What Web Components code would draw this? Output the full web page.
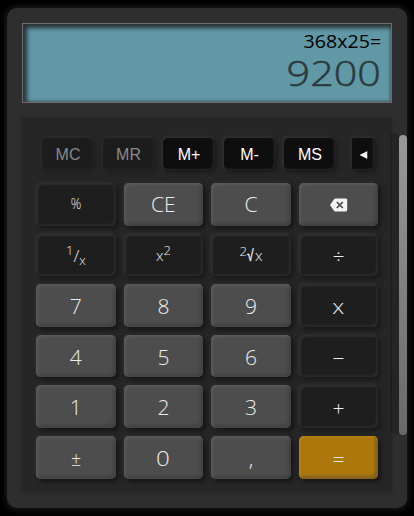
<!DOCTYPE html>
<html lang="en"><head><meta charset="utf-8"><title>Calculator</title>
<style>html,body{margin:0;background:#000;height:516px;overflow:hidden;font-family:"Open Sans","Noto Sans",sans-serif}</style></head>
<body><calc-app></calc-app>
<script>
class CalcKey extends HTMLElement{
 connectedCallback(){
  this.attachShadow({mode:'open'}).innerHTML=`<style>
  :host{box-sizing:border-box;display:flex;align-items:center;justify-content:center;border-radius:5px;color:#eee;font-size:21px;font-weight:300;line-height:1;background:#4d4d4d;box-shadow:3px 3px 4px #171717,-1px -1px 3px #303030,inset 2px 2px 3px #5a5a5a,inset -3px -3px 3px #434343}
  :host([tone=dark]){background:#1e1e1e;box-shadow:3px 3px 4px #1a1a1a,-1px -1px 3px #303030,inset 2px 2px 2px #303030,inset -2px -2px 2px #2a2a2a}
  :host([tone=gold]){background:#ad780b;box-shadow:3px 3px 4px #171717,inset 1px 1px 2px #b9841c,inset -3px -3px 3px #806020}
  :host([small]){font-size:15px}
  span{display:block;white-space:nowrap;transform:translateY(var(--dy,1px)) scaleX(var(--sx,1))}
  </style><span><slot></slot></span>`;
 }}
customElements.define('calc-key',CalcKey);
class MemKey extends HTMLElement{
 connectedCallback(){
  this.attachShadow({mode:'open'}).innerHTML=`<style>
  :host{box-sizing:border-box;display:flex;align-items:center;justify-content:center;width:51px;height:32px;border-radius:5px;background:#0e0e0e;color:#fff;font:16px/1 "Liberation Sans",Arial,sans-serif;box-shadow:2px 2px 4px #181818,-1px -1px 2px 1px #303030,inset -1px -1px 2px #292929}
  :host([off]){background:#1c1c1c;color:#888;box-shadow:2px 2px 4px #1e1e1e,-1px -1px 3px #303030,inset -1px -1px 3px #262626}
  :host([arrow]){width:22px;border-radius:2px;margin-left:7px;font-size:0}
  span{display:block;transform:translate(.5px,1px)}
  </style><span><slot></slot></span>`;
 }}
customElements.define('mem-key',MemKey);
class CalcScreen extends HTMLElement{
 connectedCallback(){
  this.attachShadow({mode:'open'}).innerHTML=`<style>
  :host{box-sizing:border-box;display:flex;flex-direction:column;align-items:flex-end;width:370px;height:80px;padding:7px 10px 0 0;border:1px solid #6c6c6c;background:#6098a5;box-shadow:inset 3px 3px 4px 1px #293234,inset -1px -1px 3px #4d626a;color:#000}
  .expression{font-size:18px;line-height:20px;height:20px;white-space:nowrap;transform-origin:right;transform:scaleX(1.09)}
  .result{font-size:35px;line-height:44px;font-weight:300;color:#2b393e;-webkit-text-stroke:.5px #2b393e;transform-origin:right;transform:scaleX(1.18)}
  </style><div class="expression"><slot name="expression"></slot></div><div class="result"><slot></slot></div>`;
 }}
customElements.define('calc-screen',CalcScreen);
class CalcApp extends HTMLElement{
 connectedCallback(){
  this.attachShadow({mode:'open'}).innerHTML=`<style>
  :host{box-sizing:border-box;display:block;width:400px;height:500px;margin:8px 7px;padding:15px 0 0 15px;border-radius:10px;background:#2e2e2e;box-shadow:0 0 7px 1px #202020}
  .body{display:flex;margin-top:15px}
  .pad{box-sizing:border-box;width:370px;height:374px;background:#262626;padding:20px 14px 0;box-shadow:0 0 3px #262626}
  .memory{display:flex;gap:9.5px;padding-left:6px}
  .keys{display:grid;grid-template-columns:repeat(4,79.6px);grid-auto-rows:42.6px;gap:8px;margin-top:13px}
  .rail{width:7px;height:299px;margin-top:17px;background:#252525;box-shadow:-1px -1px 2px #1b1b1b}
  .thumb{width:8px;height:300px;margin-top:17px;border-radius:4px;background:linear-gradient(#999,#696969)}
  .fraction{display:flex;font-size:17px;line-height:17px}
  .fraction i{font-style:normal;font-size:13px}.fraction i:first-child{transform:translateY(-5px)}.fraction i:last-child{transform:translateY(5px)}
  sup{font-size:13px;line-height:0;vertical-align:6px}
  .radical{display:flex;align-items:center}
  .radical sup{transform:translateY(-5px)}
  .root{font-family:"DejaVu Sans",sans-serif;font-size:16px;width:8px;transform-origin:left;transform:scaleX(.75);color:#fff;-webkit-text-stroke:.3px #fff}
  svg{display:block}
  </style>
  <calc-screen><span slot="expression">368x25=</span>9200</calc-screen>
  <div class="body"><div class="pad"><div class="memory">
  <mem-key off>MC</mem-key><mem-key off>MR</mem-key><mem-key>M+</mem-key><mem-key>M-</mem-key><mem-key>MS</mem-key><mem-key arrow><svg width="8" height="8"><path d="M0 4 8 0v8z" fill="#fff"/></svg></mem-key></div>
  <div class="keys">
  <calc-key tone="dark" small style="--sx:.87;--dy:-1px">%</calc-key><calc-key style="--dy:0px">CE</calc-key><calc-key style="--dy:0px">C</calc-key>
  <calc-key><svg width="18" height="14" viewBox="0 0 18 14"><path d="M5.4.5h10.4q1.4 0 1.4 1.4v10.2q0 1.4-1.4 1.4H5.4q-.7 0-1.2-.6L0 7l4.2-5.900Q4.700.5 5.400.5Z" fill="#f3f3f3"/><path d="m6.800 4 6 6m0-6-6 6" stroke="#484848" stroke-width="1.700"/></svg></calc-key>
  <calc-key tone="dark" small><div class="fraction"><i>1</i>/<i>x</i></div></calc-key><calc-key tone="dark" small>x<sup>2</sup></calc-key><calc-key tone="dark" small><div class="radical"><sup>2</sup><span class="root">√</span>x</div></calc-key><calc-key tone="dark" style="--dy:2px">÷</calc-key>
  <calc-key>7</calc-key><calc-key>8</calc-key><calc-key>9</calc-key><calc-key tone="dark" style="--sx:1.150">x</calc-key>
  <calc-key>4</calc-key><calc-key>5</calc-key><calc-key>6</calc-key><calc-key tone="dark" style="--dy:2px">−</calc-key>
  <calc-key>1</calc-key><calc-key>2</calc-key><calc-key>3</calc-key><calc-key tone="dark" style="--dy:2px">+</calc-key>
  <calc-key style="--sx:.85;--dy:1px">±</calc-key><calc-key style="--sx:1.150">0</calc-key><calc-key>,</calc-key><calc-key tone="gold" style="--dy:2px">=</calc-key>
  </div></div><div class="rail"></div><div class="thumb"></div></div>`;
 }}
customElements.define('calc-app',CalcApp);
</script></body></html>
